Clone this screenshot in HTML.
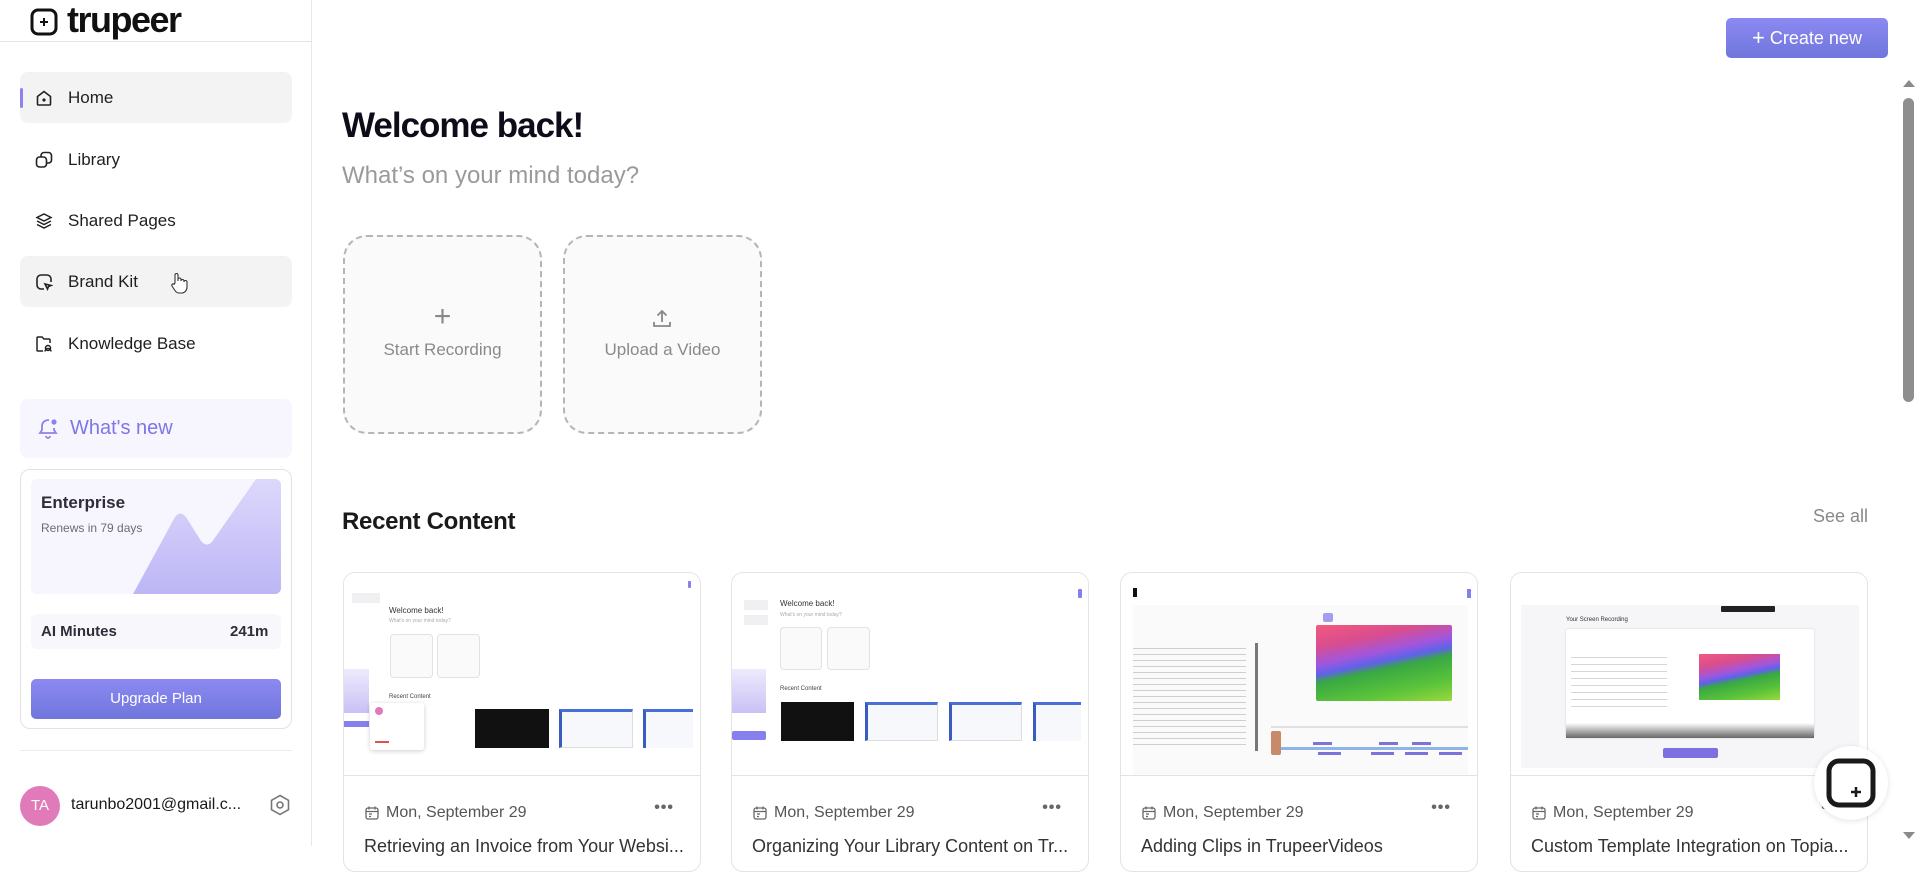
<!DOCTYPE html>
<html><head><meta charset="utf-8">
<style>
*{box-sizing:border-box;margin:0;padding:0}
body{width:1920px;height:846px;overflow:hidden;background:#fff;font-family:"Liberation Sans",sans-serif;color:#1a1a1a;position:relative}
.abs{position:absolute}
.side{position:absolute;left:0;top:0;width:312px;height:846px;border-right:1px solid #e8e8e8;background:#fff}
.nav{position:absolute;left:20px;width:272px;height:51px;border-radius:8px;display:flex;align-items:center;font-size:17px;color:#1f1f1f}
.nav svg{position:absolute;left:15px}
.nav span{position:absolute;left:48px}
.card{position:absolute;top:572px;width:358px;height:300px;border:1px solid #e3e3e3;border-radius:12px;overflow:hidden;background:#fff}
.thumb{position:absolute;left:0;top:0;width:100%;height:203px;background:#fff;border-bottom:1px solid #e3e3e3;overflow:hidden}
.date{position:absolute;left:20px;top:231px;font-size:16px;color:#555;display:flex;align-items:center;gap:6px}
.dots{position:absolute;right:26px;top:226px;font-size:16px;color:#666;letter-spacing:1px;font-weight:bold}
.ttl{position:absolute;left:20px;top:263px;font-size:18px;color:#333;white-space:nowrap}
.m{position:absolute}
.grad{background:linear-gradient(168deg,#f25a7e 0%,#d94d8f 22%,#a256dc 38%,#5f62ea 48%,#38a843 56%,#5cc43a 80%,#9bd83c 100%)}
</style></head><body>

<div class="side">
  <svg class="abs" style="left:30px;top:8px" width="28" height="28" viewBox="0 0 28 28"><rect x="2" y="2" width="24" height="24" rx="6" fill="none" stroke="#111" stroke-width="3"/><path d="M14 10v8M10 14h8" stroke="#111" stroke-width="2"/></svg>
  <div class="abs" style="left:67px;top:0px;font-size:36px;font-weight:bold;color:#111;letter-spacing:-1.5px;line-height:40px">trupeer</div>
  <div class="abs" style="left:0;top:41px;width:312px;height:1px;background:#e5e5e5"></div>

  <div class="nav" style="top:72px;background:#f3f3f3"><div class="abs" style="left:0;top:16px;width:3px;height:20px;background:#8b84f0;border-radius:2px"></div>
    <svg width="18" height="18" viewBox="0 0 18 18" fill="none" stroke="#222" stroke-width="1.6"><path d="M2.5 7.5L9 2.5l6.5 5V15a1 1 0 0 1-1 1h-11a1 1 0 0 1-1-1z"/><circle cx="9" cy="11" r=".8" fill="#222"/></svg><span>Home</span></div>
  <div class="nav" style="top:134px"><svg width="18" height="18" viewBox="0 0 18 18" fill="none" stroke="#222" stroke-width="1.6"><rect x="1.5" y="6" width="10" height="10" rx="3"/><path d="M6 6V4.5a3 3 0 0 1 3-3h4.5a3 3 0 0 1 3 3V9a3 3 0 0 1-3 3H11.5"/></svg><span>Library</span></div>
  <div class="nav" style="top:195px"><svg width="18" height="18" viewBox="0 0 18 18" fill="none" stroke="#222" stroke-width="1.5"><path d="M9 2l7 3.5-7 3.5-7-3.5z"/><path d="M2 9l7 3.5L16 9"/><path d="M2 12.5L9 16l7-3.5"/></svg><span>Shared Pages</span></div>
  <div class="nav" style="top:256px;background:#f3f3f3"><svg width="18" height="18" viewBox="0 0 18 18" fill="none" stroke="#222" stroke-width="1.6"><path d="M9 16H6a4 4 0 0 1-4-4V6a4 4 0 0 1 4-4h6a4 4 0 0 1 4 4v3"/><path d="M10 11l6 1.5-2.5 1-1 2.5z"/></svg><span>Brand Kit</span>
    <svg style="left:150px;top:16px" width="18" height="22" viewBox="0 0 18 22" fill="#fff" stroke="#333" stroke-width="1.1"><path d="M5 11V3a1.5 1.5 0 0 1 3 0v6V7.5a1.5 1.5 0 0 1 3 0V9a1.5 1.5 0 0 1 3 0v1a1.5 1.5 0 0 1 3 0v5c0 3-2 6-5.5 6H9c-2 0-3-1-4-2.5L2 14a1.4 1.4 0 0 1 2.2-1.7z"/></svg></div>
  <div class="nav" style="top:318px"><svg width="18" height="18" viewBox="0 0 18 18" fill="none" stroke="#222" stroke-width="1.5"><path d="M8 16H3a1 1 0 0 1-1-1V3a1 1 0 0 1 1-1h4l2 2h5a1 1 0 0 1 1 1v3"/><circle cx="13" cy="13" r="2.5"/><path d="M10 16.5a3 3 0 0 1 6 0"/></svg><span>Knowledge Base</span></div>

  <div class="abs" style="left:20px;top:399px;width:272px;height:59px;background:#f7f6fe;border-radius:8px"></div>
  <svg class="abs" style="left:36px;top:416px" width="24" height="24" viewBox="0 0 24 24" fill="none" stroke="#8a82ee" stroke-width="1.8"><path d="M13 4.2A6 6 0 0 0 6 10v4l-2 3h16l-2-3v-2"/><path d="M10 20a2 2 0 0 0 4 0"/><circle cx="18" cy="6" r="2.6" fill="#8a82ee" stroke="none"/></svg>
  <div class="abs" style="left:70px;top:417px;font-size:20px;color:#7d76e6">What's new</div>

  <div class="abs" style="left:20px;top:469px;width:272px;height:260px;border:1px solid #e2e2e6;border-radius:10px"></div>
  <div class="abs" style="left:31px;top:479px;width:250px;height:115px;border-radius:6px;background:#f7f6fe;overflow:hidden">
    <svg class="abs" style="left:0;top:0" width="250" height="115" viewBox="0 0 250 115"><defs><linearGradient id="mg" x1="0" y1="0" x2="0" y2="1"><stop offset="0" stop-color="#dcd8fb"/><stop offset="1" stop-color="#bdb6f6"/></linearGradient></defs><path d="M102 115L144 38Q149 31 155 38L170 62Q177 70 183 60L225 0H250V115Z" fill="url(#mg)"/></svg>
    <div class="abs" style="left:10px;top:14px;font-size:17px;font-weight:bold;color:#2e2e3a">Enterprise</div>
    <div class="abs" style="left:10px;top:42px;font-size:12px;color:#6b6b76">Renews in 79 days</div>
  </div>
  <div class="abs" style="left:31px;top:614px;width:250px;height:35px;background:#f8f8fc;border-radius:6px"></div>
  <div class="abs" style="left:41px;top:623px;font-size:15px;font-weight:bold;color:#2e2e3a">AI Minutes</div>
  <div class="abs" style="left:230px;top:623px;font-size:15px;font-weight:bold;color:#2e2e3a">241m</div>
  <div class="abs" style="left:31px;top:679px;width:250px;height:40px;border-radius:5px;background:linear-gradient(#8c89f2,#6f76dc);color:#fff;font-size:15px;text-align:center;line-height:40px">Upgrade Plan</div>

  <div class="abs" style="left:20px;top:750px;width:272px;height:1px;background:#ececec"></div>
  <div class="abs" style="left:20px;top:786px;width:40px;height:40px;border-radius:50%;background:#e07ab8;color:#fff;font-size:15px;text-align:center;line-height:40px">TA</div>
  <div class="abs" style="left:71px;top:796px;font-size:16px;color:#1a1a1a">tarunbo2001@gmail.c...</div>
  <svg class="abs" style="left:268px;top:793px" width="24" height="24" viewBox="0 0 24 24" fill="none" stroke="#777" stroke-width="1.6"><path d="M12 2.5l8.5 4.8v9.4L12 21.5l-8.5-4.8V7.3z"/><circle cx="12" cy="12" r="3"/></svg>
</div>

<!-- main -->
<div class="abs" style="left:1726px;top:18px;width:162px;height:40px;border-radius:5px;background:linear-gradient(#8c89f2,#6f76dc);color:#fff;font-size:18px;line-height:40px;text-align:center"><span style="font-size:22px;vertical-align:-1px">+</span> Create new</div>
<div class="abs" style="left:1903px;top:80px;width:0;height:0;border-left:6px solid transparent;border-right:6px solid transparent;border-bottom:7px solid #8a8a8a"></div>
<div class="abs" style="left:1903px;top:98px;width:11px;height:304px;border-radius:6px;background:#8e8e8e"></div>
<div class="abs" style="left:1903px;top:832px;width:0;height:0;border-left:6px solid transparent;border-right:6px solid transparent;border-top:7px solid #8a8a8a"></div>

<div class="abs" style="left:342px;top:106px;font-size:35px;font-weight:bold;color:#0d0d1a;letter-spacing:-1px">Welcome back!</div>
<div class="abs" style="left:342px;top:162px;font-size:24px;color:#9a9a9a">What’s on your mind today?</div>

<div class="abs" style="left:343px;top:235px;width:199px;height:199px;border:2px dashed #b5b5b5;border-radius:24px;background:#fafafa"></div>
<div class="abs" style="left:343px;top:300px;width:199px;text-align:center;font-size:30px;color:#888;font-weight:300">+</div>
<div class="abs" style="left:343px;top:340px;width:199px;text-align:center;font-size:17px;color:#8a8a8a">Start Recording</div>
<div class="abs" style="left:563px;top:235px;width:199px;height:199px;border:2px dashed #b5b5b5;border-radius:24px;background:#fafafa"></div>
<svg class="abs" style="left:650px;top:307px" width="24" height="24" viewBox="0 0 24 24" fill="none" stroke="#888" stroke-width="1.8"><path d="M12 15V4M7.5 8.5L12 4l4.5 4.5M4 15v4h16v-4"/></svg>
<div class="abs" style="left:563px;top:340px;width:199px;text-align:center;font-size:17px;color:#8a8a8a">Upload a Video</div>

<div class="abs" style="left:342px;top:508px;font-size:24px;font-weight:bold;color:#1a1a1a;letter-spacing:-0.3px">Recent Content</div>
<div class="abs" style="left:1813px;top:506px;font-size:18px;color:#888">See all</div>

<!-- card 1 -->
<div class="card" style="left:343px">
 <div class="thumb">
  <div class="m" style="left:8px;top:20px;width:28px;height:10px;background:#f0f0f2"></div>
  <div class="m" style="left:0;top:96px;width:25px;height:44px;background:linear-gradient(#eeeafd,#c9c1f5)"></div>
  <div class="m" style="left:0;top:148px;width:25px;height:6px;background:#8580ee"></div>
  <div class="m" style="left:45px;top:33px;font-size:8px;color:#333">Welcome back!</div>
  <div class="m" style="left:45px;top:45px;font-size:5px;color:#aaa">What's on your mind today?</div>
  <div class="m" style="left:46px;top:61px;width:43px;height:44px;border:1px solid #e2e2e2;border-radius:4px;background:#fafafa"></div>
  <div class="m" style="left:93px;top:61px;width:43px;height:44px;border:1px solid #e2e2e2;border-radius:4px;background:#fafafa"></div>
  <div class="m" style="left:45px;top:121px;font-size:6px;color:#444">Recent Content</div>
  <div class="m" style="left:131px;top:136px;width:74px;height:39px;background:#111"></div>
  <div class="m" style="left:215px;top:136px;width:74px;height:39px;border:1px solid #ddd;border-top:3px solid #4a6fd6;border-left:3px solid #3a5cc0;background:#f7f8fb"></div>
  <div class="m" style="left:299px;top:136px;width:50px;height:39px;border-top:3px solid #4a6fd6;border-left:3px solid #3a5cc0;background:#f7f8fb"></div>
  <div class="m" style="left:26px;top:130px;width:54px;height:47px;background:#fff;border-radius:3px;box-shadow:0 1px 5px rgba(0,0,0,.2)"><div class="m" style="left:5px;top:4px;width:8px;height:8px;border-radius:50%;background:#e07ab8"></div><div class="m" style="left:5px;top:38px;width:14px;height:2px;background:#e05050"></div></div>
  <div class="m" style="left:344px;top:8px;width:3px;height:7px;background:#8580ee;border-radius:1px"></div>
 </div>
 <div class="date"><svg width="16" height="16" viewBox="0 0 16 16" fill="none" stroke="#666" stroke-width="1.3"><rect x="2" y="3" width="12" height="11" rx="2"/><path d="M2 6.5h12M5 1.5v3M11 1.5v3M5 9h3M5 11.5h2"/></svg>Mon, September 29</div>
 <div class="dots">•••</div>
 <div class="ttl">Retrieving an Invoice from Your Websi...</div>
</div>

<!-- card 2 -->
<div class="card" style="left:731px">
 <div class="thumb">
  <div class="m" style="left:12px;top:27px;width:24px;height:10px;background:#f0f0f2"></div>
  <div class="m" style="left:12px;top:42px;width:24px;height:10px;background:#f0f0f2"></div>
  <div class="m" style="left:0;top:96px;width:34px;height:44px;background:linear-gradient(#eeeafd,#c9c1f5)"></div>
  <div class="m" style="left:0;top:158px;width:34px;height:9px;background:#8580ee;border-radius:2px"></div>
  <div class="m" style="left:48px;top:26px;font-size:8px;color:#333">Welcome back!</div>
  <div class="m" style="left:48px;top:39px;font-size:5px;color:#aaa">What's on your mind today?</div>
  <div class="m" style="left:48px;top:54px;width:42px;height:43px;border:1px solid #e2e2e2;border-radius:4px;background:#fafafa"></div>
  <div class="m" style="left:95px;top:54px;width:43px;height:43px;border:1px solid #e2e2e2;border-radius:4px;background:#fafafa"></div>
  <div class="m" style="left:48px;top:113px;font-size:6px;color:#444">Recent Content</div>
  <div class="m" style="left:49px;top:129px;width:73px;height:39px;background:#111"></div>
  <div class="m" style="left:133px;top:129px;width:73px;height:39px;border:1px solid #ddd;border-top:3px solid #4a6fd6;border-left:3px solid #3a5cc0;background:#f7f8fb"></div>
  <div class="m" style="left:217px;top:129px;width:73px;height:39px;border:1px solid #ddd;border-top:3px solid #4a6fd6;border-left:3px solid #3a5cc0;background:#f7f8fb"></div>
  <div class="m" style="left:301px;top:129px;width:48px;height:39px;border-top:3px solid #4a6fd6;border-left:3px solid #3a5cc0;background:#f7f8fb"></div>
  <div class="m" style="left:346px;top:16px;width:4px;height:9px;background:#8580ee;border-radius:1px"></div>
 </div>
 <div class="date"><svg width="16" height="16" viewBox="0 0 16 16" fill="none" stroke="#666" stroke-width="1.3"><rect x="2" y="3" width="12" height="11" rx="2"/><path d="M2 6.5h12M5 1.5v3M11 1.5v3M5 9h3M5 11.5h2"/></svg>Mon, September 29</div>
 <div class="dots">•••</div>
 <div class="ttl">Organizing Your Library Content on Tr...</div>
</div>

<!-- card 3 -->
<div class="card" style="left:1120px">
 <div class="thumb">
  <div class="m" style="left:12px;top:15px;width:4px;height:9px;background:#111"></div>
  <div class="m" style="left:12px;top:32px;width:335px;height:170px;background:#fafafa"></div>
  <div class="m" style="left:12px;top:72px;width:113px;height:100px;background:repeating-linear-gradient(#fafafa 0 3px,#cfcfcf 3px 4px,#fafafa 4px 6px)"></div>
  <div class="m" style="left:134px;top:70px;width:3px;height:108px;background:#777"></div>
  <div class="m" style="left:202px;top:40px;width:10px;height:9px;background:#a39cf0;border-radius:2px"></div>
  <div class="m grad" style="left:195px;top:52px;width:136px;height:76px;border-radius:2px"></div>
  <div class="m" style="left:150px;top:153px;width:197px;height:2px;background:#e0e0e0"></div>
  <div class="m" style="left:150px;top:158px;width:10px;height:24px;background:#c98a6a;border-radius:2px"></div>
  <div class="m" style="left:160px;top:174px;width:187px;height:3px;background:#8fb4ec"></div>
  <div class="m" style="left:192px;top:169px;width:19px;height:3px;background:#7a73d9"></div>
  <div class="m" style="left:258px;top:169px;width:19px;height:3px;background:#7a73d9"></div>
  <div class="m" style="left:291px;top:169px;width:19px;height:3px;background:#7a73d9"></div>
  <div class="m" style="left:197px;top:179px;width:23px;height:3px;background:#7a73d9"></div>
  <div class="m" style="left:250px;top:179px;width:23px;height:3px;background:#7a73d9"></div>
  <div class="m" style="left:284px;top:179px;width:23px;height:3px;background:#7a73d9"></div>
  <div class="m" style="left:318px;top:179px;width:23px;height:3px;background:#7a73d9"></div>
  <div class="m" style="left:346px;top:16px;width:4px;height:9px;background:#8580ee"></div>
 </div>
 <div class="date"><svg width="16" height="16" viewBox="0 0 16 16" fill="none" stroke="#666" stroke-width="1.3"><rect x="2" y="3" width="12" height="11" rx="2"/><path d="M2 6.5h12M5 1.5v3M11 1.5v3M5 9h3M5 11.5h2"/></svg>Mon, September 29</div>
 <div class="dots">•••</div>
 <div class="ttl">Adding Clips in TrupeerVideos</div>
</div>

<!-- card 4 -->
<div class="card" style="left:1510px">
 <div class="thumb">
  <div class="m" style="left:10px;top:32px;width:338px;height:163px;background:#f6f6f8"></div>
  <div class="m" style="left:55px;top:44px;font-size:6px;color:#333">Your Screen Recording</div>
  <div class="m" style="left:210px;top:33px;width:54px;height:6px;background:#222;border-radius:1px"></div>
  <div class="m" style="left:55px;top:56px;width:248px;height:109px;background:#fff;border-radius:3px;box-shadow:0 0 2px rgba(0,0,0,.15)"></div>
  <div class="m" style="left:60px;top:80px;width:96px;height:60px;background:repeating-linear-gradient(#fff 0 4px,#d6d6d6 4px 5px,#fff 5px 7px)"></div>
  <div class="m grad" style="left:188px;top:81px;width:81px;height:46px"></div>
  <div class="m" style="left:55px;top:150px;width:248px;height:15px;background:linear-gradient(rgba(0,0,0,0),rgba(0,0,0,.6))"></div>
  <div class="m" style="left:152px;top:175px;width:55px;height:10px;background:#7d6fe0;border-radius:2px"></div>
 </div>
 <div class="date"><svg width="16" height="16" viewBox="0 0 16 16" fill="none" stroke="#666" stroke-width="1.3"><rect x="2" y="3" width="12" height="11" rx="2"/><path d="M2 6.5h12M5 1.5v3M11 1.5v3M5 9h3M5 11.5h2"/></svg>Mon, September 29</div>
 <div class="dots">•••</div>
 <div class="ttl">Custom Template Integration on Topia...</div>
</div>

<!-- floating button -->
<div class="abs" style="left:1814px;top:746px;width:74px;height:74px;border-radius:50%;background:#fff;box-shadow:0 1px 6px rgba(0,0,0,.12)"></div>
<svg class="abs" style="left:1826px;top:758px" width="50" height="50" viewBox="0 0 50 50"><rect x="3" y="3" width="44" height="44" rx="10" fill="none" stroke="#1a1a1a" stroke-width="5"/><path d="M30 29V39M25 34h10" stroke="#1a1a1a" stroke-width="2.5"/></svg>
</body></html>
